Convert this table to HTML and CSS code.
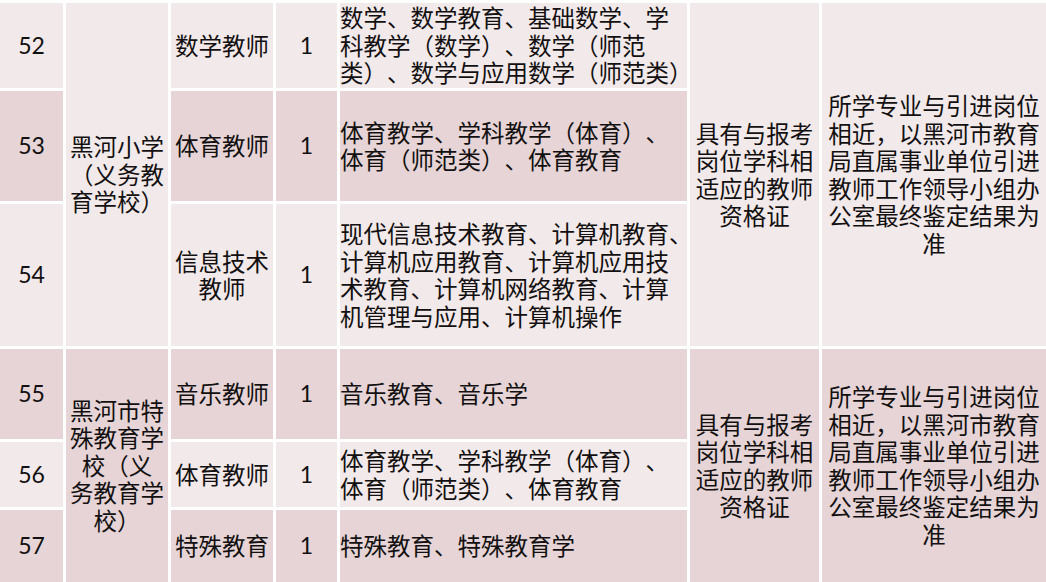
FILE: index.html
```html
<!DOCTYPE html>
<html lang="zh-CN">
<head>
<meta charset="utf-8">
<title>岗位表</title>
<link rel="stylesheet" href="styles.css">
</head>
<body>
<table class="grid">
  <colgroup>
    <col class="c-no">
    <col class="c-school">
    <col class="c-post">
    <col class="c-count">
    <col class="c-major">
    <col class="c-qual">
    <col class="c-note">
  </colgroup>
  <tbody>
    <tr class="r52">
      <td class="lt num">52</td>
      <td class="lt ctr" rowspan="3">黑河小学<br>（义务教<br>育学校）</td>
      <td class="lt ctr">数学教师</td>
      <td class="lt num">1</td>
      <td class="lt major">数学、数学教育、基础数学、学<br>科教学（数学）、数学（师范<br>类）、数学与应用数学（师范类）</td>
      <td class="lt ctr" rowspan="3">具有与报考<br>岗位学科相<br>适应的教师<br>资格证</td>
      <td class="lt ctr" rowspan="3">所学专业与引进岗位<br>相近，以黑河市教育<br>局直属事业单位引进<br>教师工作领导小组办<br>公室最终鉴定结果为<br>准</td>
    </tr>
    <tr class="r53">
      <td class="dk num">53</td>
      <td class="dk ctr">体育教师</td>
      <td class="dk num">1</td>
      <td class="dk major">体育教学、学科教学（体育）、<br>体育（师范类）、体育教育</td>
    </tr>
    <tr class="r54">
      <td class="lt num">54</td>
      <td class="lt ctr">信息技术<br>教师</td>
      <td class="lt num">1</td>
      <td class="lt major">现代信息技术教育、计算机教育、<br>计算机应用教育、计算机应用技<br>术教育、计算机网络教育、计算<br>机管理与应用、计算机操作</td>
    </tr>
    <tr class="r55">
      <td class="dk num">55</td>
      <td class="dk ctr" rowspan="3">黑河市特<br>殊教育学<br>校（义<br>务教育学<br>校）</td>
      <td class="dk ctr">音乐教师</td>
      <td class="dk num">1</td>
      <td class="dk major">音乐教育、音乐学</td>
      <td class="dk ctr" rowspan="3">具有与报考<br>岗位学科相<br>适应的教师<br>资格证</td>
      <td class="dk ctr" rowspan="3">所学专业与引进岗位<br>相近，以黑河市教育<br>局直属事业单位引进<br>教师工作领导小组办<br>公室最终鉴定结果为<br>准</td>
    </tr>
    <tr class="r56">
      <td class="lt num">56</td>
      <td class="lt ctr">体育教师</td>
      <td class="lt num">1</td>
      <td class="lt major">体育教学、学科教学（体育）、<br>体育（师范类）、体育教育</td>
    </tr>
    <tr class="r57">
      <td class="dk num">57</td>
      <td class="dk ctr">特殊教育</td>
      <td class="dk num">1</td>
      <td class="dk major">特殊教育、特殊教育学</td>
    </tr>
  </tbody>
</table>
</body>
</html>
```
FILE: styles.css
```css
html, body {
  margin: 0;
  padding: 0;
  background: #ffffff;
  overflow: hidden;
}

.grid {
  table-layout: fixed;
  border-collapse: separate;
  border-spacing: 3px;
  margin-left: -3px;
  margin-top: -3px;
  padding-top: 3px;
  width: 1052px;
  background: #ffffff;
  font-family: "Noto Sans CJK SC", "Noto Sans", sans-serif;
  font-size: 23.5px;
  line-height: 27.5px;
  color: #121010;
  text-spacing-trim: space-all;
  font-feature-settings: "halt" 0, "chws" 0;
}

.c-no { width: 63px; }
.c-school { width: 102px; }
.c-post { width: 102px; }
.c-count { width: 61px; }
.c-major { width: 347px; }
.c-qual { width: 129px; }
.c-note { width: 224px; }

.grid td {
  padding: 0;
  vertical-align: middle;
  white-space: nowrap;
}

.lt { background: #f2e9ea; }
.dk { background: #e6d4d6; }

.ctr { text-align: center; }

.num {
  text-align: center;
  font-family: "Lato", "Open Sans", sans-serif;
  font-size: 23px;
}

.major {
  text-align: left;
  padding-left: 1px;
}

.r52 { height: 85px; }
.r53 { height: 110px; }
.r54 { height: 142px; }
.r55 { height: 90px; }
.r56 { height: 65px; }
.r57 { height: 72px; }
```
